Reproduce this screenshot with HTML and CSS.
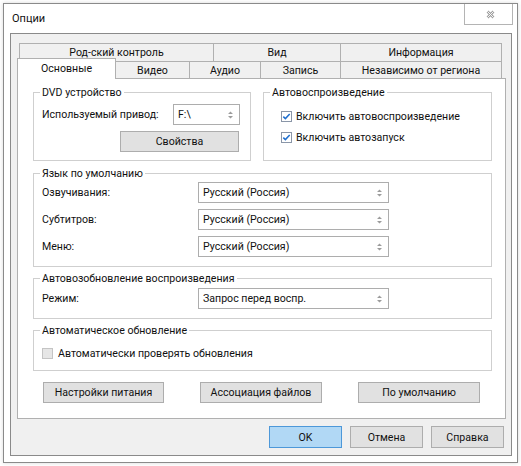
FILE: index.html
```html
<!DOCTYPE html>
<html>
<head>
<meta charset="utf-8">
<title>Опции</title>
<link rel="stylesheet" href="styles.css">
</head>
<body>
<div class="window">
  <div class="titlebar">
    <span class="title">Опции</span>
    <div class="close">
      <svg width="9" height="9" viewBox="0 0 9 9"><path d="M1.5 1.5 L7.5 7.5 M7.5 1.5 L1.5 7.5" stroke="#a0a0a0" stroke-width="2.6" fill="none"/><path d="M1.5 1.5 L7.5 7.5 M7.5 1.5 L1.5 7.5" stroke="#fff" stroke-width="0.9" fill="none"/></svg>
    </div>
  </div>
  <div class="frame">
    <div class="tabrow back">
      <div class="tab w-parental">Род-ский контроль</div>
      <div class="tab w-view">Вид</div>
      <div class="tab w-info">Информация</div>
    </div>
    <div class="tabrow front">
      <div class="tab active w-main">Основные</div>
      <div class="tab w-video">Видео</div>
      <div class="tab w-audio">Аудио</div>
      <div class="tab w-rec">Запись</div>
      <div class="tab w-region">Независимо от региона</div>
    </div>
    <div class="panel">
      <div class="toprow">
        <fieldset class="grp dvd">
          <legend>DVD устройство</legend>
          <div class="row">
            <span>Используемый привод:</span>
            <div class="combo combo-drive"><span>F:\</span><svg class="arr" width="5" height="8" viewBox="0 0 5 8"><path d="M0 3 L2.5 0.5 L5 3Z M0 5 L2.5 7.5 L5 5Z" fill="#9c9c9c"/></svg></div>
          </div>
          <div class="btn btn-props">Свойства</div>
        </fieldset>
        <fieldset class="grp autoplay">
          <legend>Автовоспроизведение</legend>
          <div class="check indent"><svg class="cb" width="11" height="11" viewBox="0 0 11 11"><rect x="0.5" y="0.5" width="10" height="10" fill="#fff" stroke="#8a96a8"/><path d="M2.3 5.6 L4.4 7.6 L8.7 3" fill="none" stroke="#1f6fcf" stroke-width="1.5"/></svg><span>Включить автовоспроизведение</span></div>
          <div class="check indent"><svg class="cb" width="11" height="11" viewBox="0 0 11 11"><rect x="0.5" y="0.5" width="10" height="10" fill="#fff" stroke="#8a96a8"/><path d="M2.3 5.6 L4.4 7.6 L8.7 3" fill="none" stroke="#1f6fcf" stroke-width="1.5"/></svg><span>Включить автозапуск</span></div>
        </fieldset>
      </div>

      <fieldset class="grp lang">
        <legend>Язык по умолчанию</legend>
        <div class="formgrid">
          <span>Озвучивания:</span>
          <div class="combo"><span>Русский (Россия)</span><svg class="arr" width="5" height="8" viewBox="0 0 5 8"><path d="M0 3 L2.5 0.5 L5 3Z M0 5 L2.5 7.5 L5 5Z" fill="#9c9c9c"/></svg></div>
          <span>Субтитров:</span>
          <div class="combo"><span>Русский (Россия)</span><svg class="arr" width="5" height="8" viewBox="0 0 5 8"><path d="M0 3 L2.5 0.5 L5 3Z M0 5 L2.5 7.5 L5 5Z" fill="#9c9c9c"/></svg></div>
          <span>Меню:</span>
          <div class="combo"><span>Русский (Россия)</span><svg class="arr" width="5" height="8" viewBox="0 0 5 8"><path d="M0 3 L2.5 0.5 L5 3Z M0 5 L2.5 7.5 L5 5Z" fill="#9c9c9c"/></svg></div>
        </div>
      </fieldset>

      <fieldset class="grp resume">
        <legend>Автовозобновление воспроизведения</legend>
        <div class="formgrid">
          <span>Режим:</span>
          <div class="combo"><span>Запрос перед воспр.</span><svg class="arr" width="5" height="8" viewBox="0 0 5 8"><path d="M0 3 L2.5 0.5 L5 3Z M0 5 L2.5 7.5 L5 5Z" fill="#9c9c9c"/></svg></div>
        </div>
      </fieldset>

      <fieldset class="grp update">
        <legend>Автоматическое обновление</legend>
        <div class="check"><svg class="cb" width="11" height="11" viewBox="0 0 11 11"><rect x="0.5" y="0.5" width="10" height="10" fill="#e6e6e6" stroke="#c4c4c4"/></svg><span>Автоматически проверять обновления</span></div>
      </fieldset>

      <div class="panel-buttons">
        <div class="btn pbtn">Настройки питания</div>
        <div class="btn pbtn">Ассоциация файлов</div>
        <div class="btn pbtn">По умолчанию</div>
      </div>
    </div>
    <div class="dlg-buttons">
      <div class="btn dbtn ok">OK</div>
      <div class="btn dbtn">Отмена</div>
      <div class="btn dbtn">Справка</div>
    </div>
  </div>
</div>
</body>
</html>
```
FILE: styles.css
```css
* { box-sizing: border-box; }
html, body { margin: 0; padding: 0; background: #fff; }
body {
  font-family: Roboto, "Liberation Sans", Arial, sans-serif;
  font-size: 10.6px;
  color: #111;
  width: 521px;
  height: 466px;
  overflow: hidden;
}
.window {
  margin: 3px 0 0 3px;
  width: 515px;
  height: 460px;
  border: 1px solid #8a8a8a;
  background: #fff;
  box-shadow: 0 0 4px rgba(0, 0, 0, 0.16);
}
.titlebar {
  display: flex;
  align-items: center;
  height: 29px;
  padding-left: 8px;
}
.title { flex: 1; font-size: 11px; }
.close {
  align-self: flex-start;
  width: 49px;
  height: 21px;
  margin-right: 4px;
  border: 1px solid #b4b4b4;
  border-top: none;
  display: flex;
  align-items: center;
  justify-content: center;
  padding-left: 3px;
  padding-top: 1px;
}
.close svg { display: block; }

.frame {
  margin-left: 6px;
  width: 502px;
  height: 423px;
  border: 1px solid #8a8a8a;
  background: #f0f0f0;
  padding: 9px 7px 7px 6px;
}

.tabrow { display: flex; }
.tabrow.back { margin-left: 2px; }
.tab {
  border: 1px solid #b0b0b0;
  background: #f0f0f0;
  display: flex;
  align-items: center;
  justify-content: center;
  white-space: nowrap;
}
.tab + .tab { margin-left: -1px; }
.back .tab { height: 19px; }
.tabrow.front { margin-top: -4px; align-items: flex-end; }
.front .tab { height: 17px; border-bottom: none; }
.front .tab.active {
  height: 21px;
  margin-bottom: -1px;
  background: #fff;
  position: relative;
  z-index: 1;
  padding-bottom: 1px;
}
.w-parental { width: 195px; }
.w-view { width: 128px; }
.w-info { width: 162px; }
.w-main { width: 99px; }
.w-video { width: 75px; }
.w-audio { width: 72px; }
.w-rec { width: 81px; }
.w-region { width: 162px; }

.panel {
  width: 489px;
  border: 1px solid #b0b0b0;
  background: #fff;
  padding: 6px 13px 15px 15px;
}

.grp {
  margin: 0;
  border: 1px solid #cfcfcf;
  padding: 0 8px;
  min-width: 0;
}
.grp legend {
  padding: 0 2px;
  margin-left: -2px;
  line-height: 15px;
  height: 15px;
}

.toprow {
  display: grid;
  grid-template-columns: 218px 1fr;
  column-gap: 12px;
  margin-bottom: 5px;
}
.dvd { padding: 4px 10px 8px 8px; }
.row { display: flex; align-items: center; }
.row .combo { margin-left: auto; }
.btn-props { width: 119px; margin: 6px 1px 0 auto; }

.autoplay { padding-top: 7px; }
.check {
  display: flex;
  align-items: center;
  height: 18px;
}
.check + .check { margin-top: 3px; }
.check.indent { padding-left: 9px; }
.cb { display: block; margin-right: 4px; flex: none; }

.formgrid {
  display: grid;
  grid-template-columns: 156px 191px;
  row-gap: 6px;
  align-items: center;
}
.lang { padding: 1px 8px 9px 8px; margin-bottom: 4px; }
.resume { padding: 2px 8px 9px 8px; margin-bottom: 4px; }
.update { padding: 6px 8px 8px 8px; }
.update .cb { margin-right: 5px; }

.combo {
  height: 21px;
  border: 1px solid #adadad;
  background: #fff;
  display: flex;
  align-items: center;
  justify-content: space-between;
  padding: 0 6px 0 4px;
  white-space: nowrap;
}
.combo-drive { width: 67px; }
.arr { display: block; flex: none; }

.btn {
  height: 21px;
  border: 1px solid #adadad;
  background: #e1e1e1;
  display: flex;
  align-items: center;
  justify-content: center;
  white-space: nowrap;
}

.panel-buttons {
  display: flex;
  gap: 36px;
  margin-top: 11px;
  padding-left: 10px;
}
.pbtn { width: 122px; }
.pbtn:first-child { width: 121px; }

.dlg-buttons {
  display: flex;
  justify-content: flex-end;
  gap: 8px;
  margin-top: 7px;
}
.dbtn { width: 73px; height: 22px; }
.ok { background: #b1d8f5; border-color: #4d98d9; }
```
